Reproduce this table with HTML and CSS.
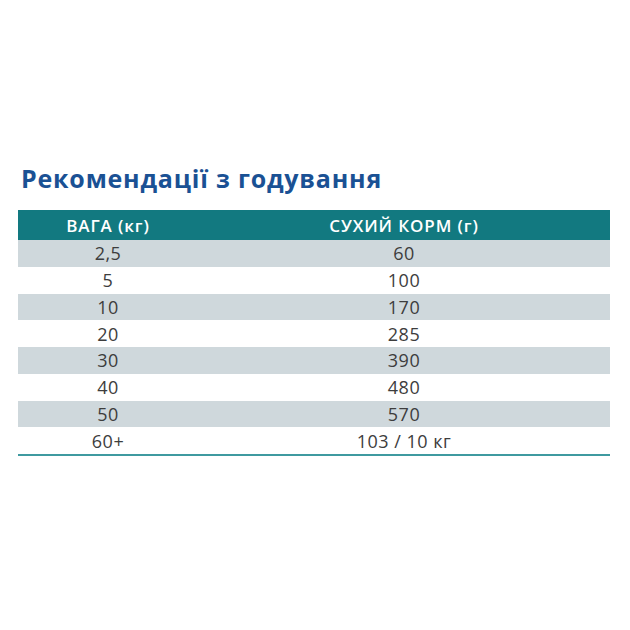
FILE: index.html
```html
<!DOCTYPE html>
<html lang="uk">
<head>
<meta charset="utf-8">
<link rel="stylesheet" href="styles.css">
</head>
<body>
<div class="page">
  <h1 class="title">Рекомендації з годування</h1>
  <table class="feed">
    <thead>
      <tr><th class="c1">ВАГА (кг)</th><th class="c2">СУХИЙ КОРМ (г)</th></tr>
    </thead>
    <tbody>
      <tr><td>2,5</td><td>60</td></tr>
      <tr><td>5</td><td>100</td></tr>
      <tr><td>10</td><td>170</td></tr>
      <tr><td>20</td><td>285</td></tr>
      <tr><td>30</td><td>390</td></tr>
      <tr><td>40</td><td>480</td></tr>
      <tr><td>50</td><td>570</td></tr>
      <tr><td>60+</td><td>103 / 10 кг</td></tr>
    </tbody>
  </table>
</div>
</body>
</html>
```
FILE: styles.css
```css
html, body {
  margin: 0;
  padding: 0;
  background: #ffffff;
}
.page {
  padding: 162px 20px 0 18px;
  font-family: "Open Sans", "Liberation Sans", sans-serif;
}
.title {
  margin: 0 0 0 3px;
  font-size: 25px;
  line-height: 32px;
  font-weight: 700;
  color: #1a5194;
  letter-spacing: 0.8px;
}
.feed {
  margin-top: 16px;
  width: 592px;
  border-collapse: collapse;
  border-bottom: 2px solid #3f9aa0;
}
.feed th {
  background: #127980;
  color: #ffffff;
  font-weight: 600;
  font-size: 17px;
  height: 30px;
  padding: 0;
  text-align: center;
  letter-spacing: 0.9px;
}
.feed .c1 { width: 180px; }
.feed td {
  height: 26.75px;
  padding: 0;
  text-align: center;
  font-size: 18px;
  color: #3d3d3d;
  line-height: 1;
  letter-spacing: 0.5px;
}
.feed tbody tr:nth-child(odd) td {
  background: #cfd8dc;
}
```
